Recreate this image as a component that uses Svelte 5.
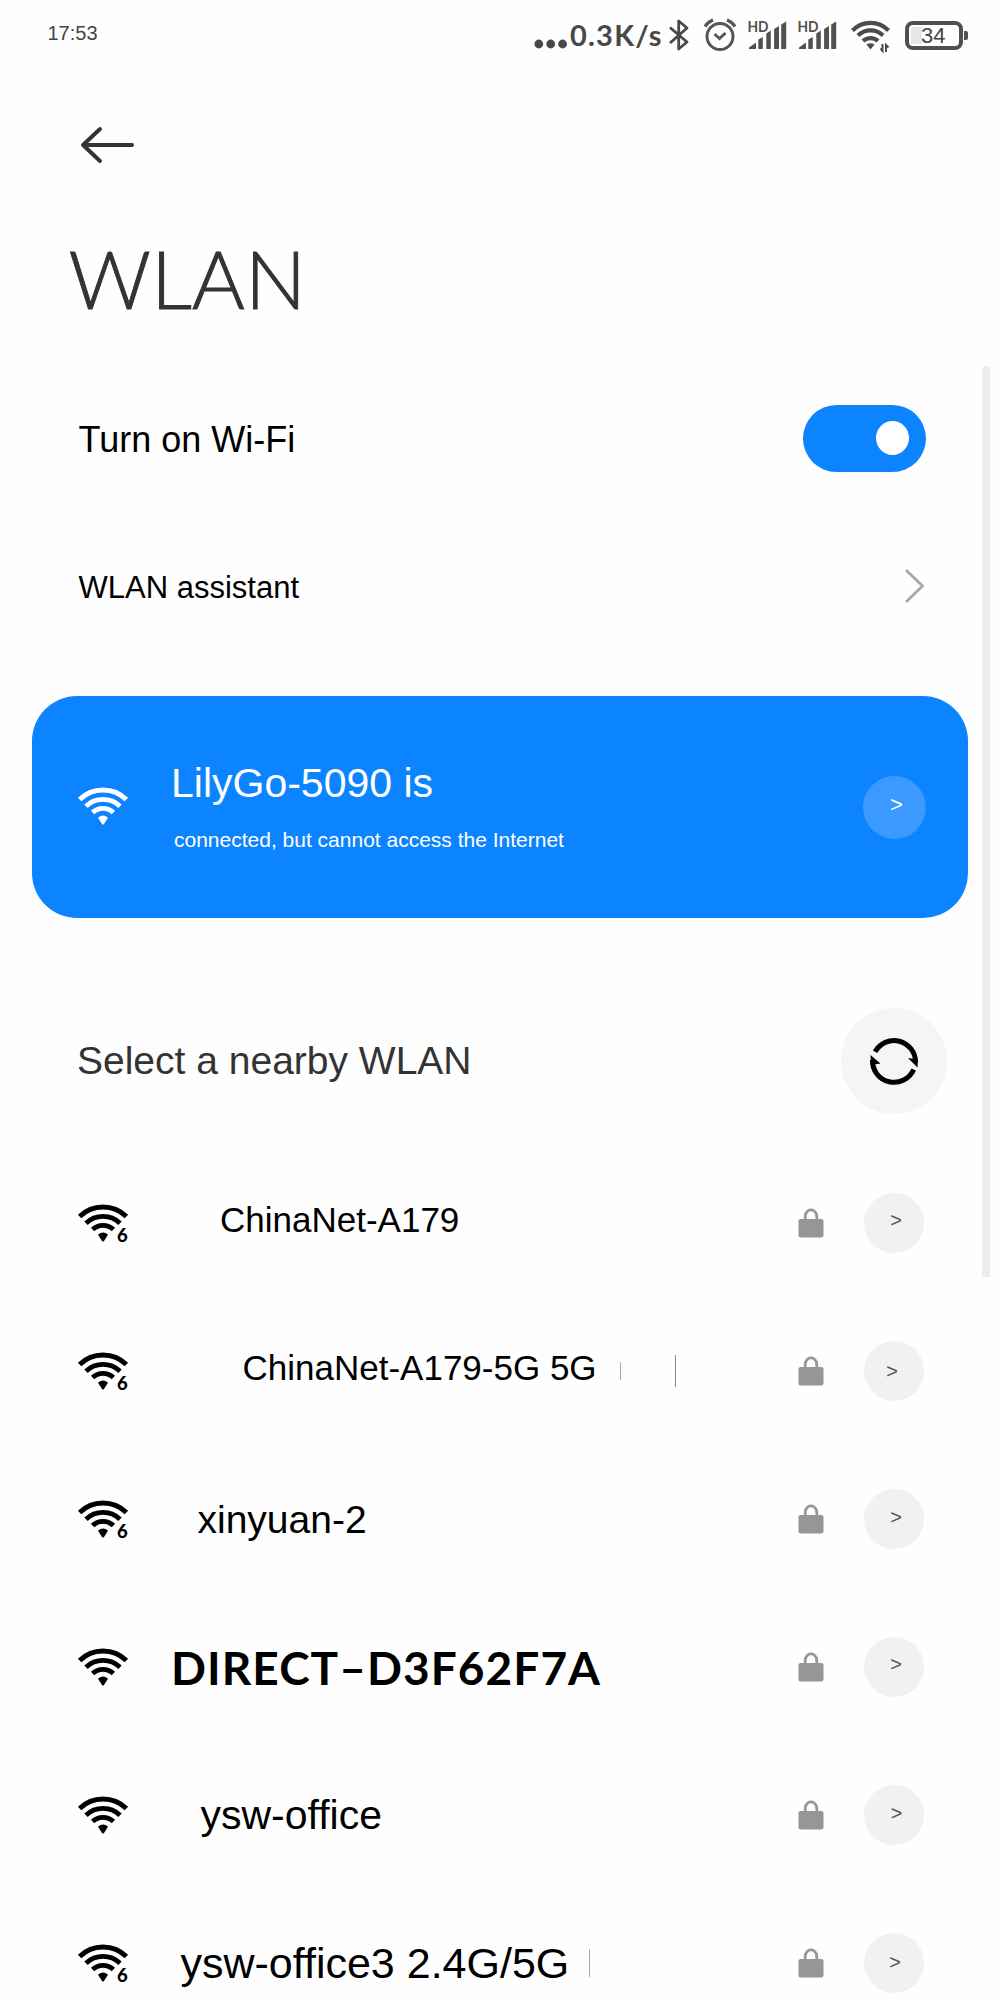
<script>
  const networks = [
    { name: 'ChinaNet-A179', six: true, size: 35, left: 220, lift: 6, dx: 2, dy: -2.5, marks: [] },
    { name: 'ChinaNet-A179-5G 5G', six: true, size: 35, left: 242.5, lift: 6, dx: -2, dy: 0.5, marks: [{ gap: 23, h: 18, c: '#aaa' }, { gap: 54, h: 32, c: '#888' }] },
    { name: 'xinyuan-2', six: true, size: 39, left: 197.5, lift: -2, dx: 2, dy: -1.5, marks: [] },
    { name: 'DIRECT–D3F62F7A', six: false, size: 46, left: 171, lift: 0, dx: 2, dy: -2.5, marks: [], bold: true },
    { name: 'ysw-office', six: false, size: 41, left: 200.5, lift: 0, dx: 2.5, dy: -1.5, marks: [] },
    { name: 'ysw-office3 2.4G/5G', six: true, size: 43, left: 180.5, lift: 0, dx: 1, dy: -0.5, marks: [{ gap: 20, h: 28, c: '#aaa' }] },
  ];
</script>

{#snippet wifi(six)}
  <svg class="wifi" viewBox="0 0 52 42" width="52" height="42">
    <g fill="none" stroke="currentColor" stroke-width="4.9">
      <path d="M1.6 13.6A33.4 33.4 0 0 1 48.4 13.6" />
      <path d="M8 20.2A24.7 24.7 0 0 1 42 20.2" />
      <path d="M14.6 26.6A14.8 14.8 0 0 1 35.4 26.6" />
    </g>
    <path d="M20 31.8Q25 27 30 31.8L26 38Q25 39 24 38Z" fill="currentColor" />
    {#if six}<text class="six" x="39" y="38.5">6</text>{/if}
  </svg>
{/snippet}

{#snippet signal()}
  <svg class="signal" viewBox="746 16 42 36" width="42" height="36">
    <text class="hd" x="747.5" y="31" textLength="21" lengthAdjust="spacingAndGlyphs">HD</text>
    <path d="M749 48V46.5L756 41.5V48ZM758.3 48V38.5L762.8 36V48ZM766.3 48V32.5L770.8 29.5V48ZM774.1 48V28L779 25V48ZM781.2 48V23.5L786.2 20.5V48Z" fill="#505050" />
  </svg>
{/snippet}

<div class="screen">
  <header class="status">
    <span class="time">17:53</span>
    <svg class="dots" viewBox="534 38 34 12" width="34" height="12">
      <circle cx="538.8" cy="44" r="4.4" /><circle cx="550.7" cy="44" r="4.4" /><circle cx="562.6" cy="44" r="4.4" />
    </svg>
    <span class="speed">0.3K/s</span>
    <svg class="bt" viewBox="668 17 22 36" width="22" height="36">
      <path d="M670 27.5L687 42L678.7 49V21L687 28L670 43" fill="none" stroke="#484848" stroke-width="2.8" stroke-linejoin="round" />
    </svg>
    <svg class="alarm" viewBox="703 17 34 36" width="34" height="36">
      <g fill="none" stroke="#555" stroke-width="3">
        <circle cx="720" cy="36.5" r="13" />
        <path d="M705 26.5Q708 22 713 20M727 20Q732 22 735 26.5" stroke-width="3.2" />
        <path d="M714.5 34L719.5 38.5L725.5 33" stroke-width="2.8" />
      </g>
    </svg>
    {@render signal()}
    {@render signal()}
    <svg class="swifi" viewBox="850 17 40 36" width="40" height="36">
      <g fill="none" stroke="#4b4b4b" stroke-width="4.2">
        <path d="M852.5 30.5A25 25 0 0 1 888.5 30.5" />
        <path d="M858 35.5A18 18 0 0 1 883 35.5" />
        <path d="M863 41A11 11 0 0 1 878 41" />
      </g>
      <path d="M866.5 44.5Q870.5 42 874.5 44.5L870.5 49.5Z" fill="#4b4b4b" />
      <path d="M882.5 44V51L880.5 48.5M886 52V45L888.5 47.5" fill="none" stroke="#4b4b4b" stroke-width="2" />
    </svg>
    <div class="battery">
      <span class="cell"><span class="level"></span><span class="pct">34</span></span>
      <span class="nub"></span>
    </div>
  </header>

  <nav class="back">
    <svg viewBox="80 125 56 40" width="56" height="40">
      <path d="M100 129L83 145L100 161M84 145H132" fill="none" stroke="#333" stroke-width="4" stroke-linecap="round" stroke-linejoin="round" />
    </svg>
  </nav>

  <h1>WLAN</h1>

  <section class="row wifi-row">
    <span class="label">Turn on Wi-Fi</span>
    <span class="toggle"><span class="knob"></span></span>
  </section>

  <section class="row assistant">
    <span class="label">WLAN assistant</span>
    <svg viewBox="904 568 22 36" width="22" height="36">
      <path d="M906 570L922.5 586L906 602" fill="none" stroke="#a8a8a8" stroke-width="2.8" />
    </svg>
  </section>

  <section class="card">
    {@render wifi(false)}
    <div class="info">
      <div class="ssid">LilyGo-5090 is</div>
      <div class="note">connected, but cannot access the Internet</div>
    </div>
    <span class="badge"><span>&gt;</span></span>
  </section>

  <section class="nearby">
    <h2>Select a nearby WLAN</h2>
    <span class="refresh">
      <svg viewBox="867.5 1034 54 54" width="54" height="54">
        <g fill="none" stroke="#000" stroke-width="5">
          <path d="M875.6 1051.8A21.5 21.5 0 0 1 916 1062" />
          <path d="M914.2 1069.4A21.5 21.5 0 0 1 873 1060" />
        </g>
        <path d="M908.5 1058L918.5 1059.5L918 1067.5ZM871 1055L881 1063.5L871.5 1065Z" />
      </svg>
    </span>
  </section>

  <ul class="list">
    {#each networks as n}
      <li style="--size:{n.size}px;--left:{n.left - 130}px;--lift:{Math.max(n.lift, 0)}px;--drop:{Math.max(-n.lift, 0)}px;--dx:{n.dx * 2}px;--dy:{n.dy * -2}px">
        {@render wifi(n.six)}
        <span class="name" class:bold={n.bold}>{n.name}</span>
        {#each n.marks as m}
          <i class="mark" style="margin-left:{m.gap}px;height:{m.h}px;background:{m.c}"></i>
        {/each}
        <svg class="lock" viewBox="0 0 26 30" width="26" height="30">
          <path d="M7.2 13V8.5A5.8 6.6 0 0 1 18.8 8.5V13" fill="none" stroke="#969696" stroke-width="2.8" />
          <rect x="0.5" y="11" width="25" height="18.5" rx="2" fill="#969696" />
        </svg>
        <span class="go"><span>&gt;</span></span>
      </li>
    {/each}
  </ul>

  <div class="scrollbar"></div>
</div>

<style>
  :global(body) { background: #fefefe; }
  * { box-sizing: border-box; }
  .screen {
    position: relative;
    width: 1000px;
    height: 2000px;
    overflow: hidden;
    background: #fefefe;
    color: #000;
    font-family: "Liberation Sans", Arial, sans-serif;
  }
  span, h1, h2, .ssid, .note { white-space: nowrap; }
  svg { flex: none; display: block; overflow: visible; }

  .status { display: flex; align-items: center; height: 70px; padding-left: 47.5px; }
  .time { width: 486.5px; font-size: 20px; line-height: 24px; color: #444; margin-top: -4px; }
  .dots { fill: #484848; margin-top: 18px; }
  .speed {
    width: 100px;
    padding-left: 2px;
    font: 700 29px/36px Lato, sans-serif;
    letter-spacing: 1.2px;
    color: #484848;
  }
  .bt { margin-right: 13px; }
  .alarm { margin-right: 9px; }
  .signal { margin-right: 8px; }
  .hd { font: 700 14.5px Lato, sans-serif; fill: #505050; }
  .swifi { margin-left: 4px; }
  .battery { display: flex; align-items: center; margin-left: 15px; }
  .cell {
    display: grid;
    grid-template-columns: 11px 1fr;
    align-items: center;
    width: 58px;
    height: 29px;
    padding: 0 2px;
    border: 4px solid #505050;
    border-radius: 8px;
    font-size: 22px;
    line-height: 21px;
    color: #444;
  }
  .level { height: 17px; background: #e6e6e6; }
  .pct { margin-left: -1px; }
  .nub { width: 4px; height: 9px; margin-left: 1px; border-radius: 0 2px 2px 0; background: #505050; }

  .back { height: 110px; padding: 55px 0 0 80px; }
  h1 {
    margin: 0;
    height: 170px;
    padding: 49px 0 0 68.5px;
    font: 300 81px/98px Lato, sans-serif;
    color: #333;
    -webkit-text-stroke: 0.9px #333;
  }
  .row { display: flex; align-items: center; justify-content: space-between; padding: 0 74.5px 0 78.5px; }
  .label { padding-top: 3px; }
  .wifi-row { height: 176px; font-size: 36px; }
  .assistant { height: 120px; font-size: 31px; }
  .toggle {
    display: flex;
    align-items: center;
    justify-content: flex-end;
    width: 123px;
    height: 67px;
    padding-right: 17px;
    border-radius: 34px;
    background: #0d84ff;
  }
  .knob { width: 33px; height: 34px; border-radius: 50%; background: #fff; }

  .card {
    display: flex;
    align-items: center;
    height: 222px;
    margin: 50px 32px 0;
    padding: 0 42px 0 46px;
    border-radius: 45px;
    background: #0d84ff;
    color: #fff;
  }
  .info { flex: 1; padding: 0 0 1px 41px; }
  .ssid { font-size: 41px; line-height: 50px; }
  .note { font-size: 21px; line-height: 30px; margin: 17px 0 0 3px; }
  .badge {
    display: flex;
    align-items: center;
    justify-content: center;
    width: 63px;
    height: 63px;
    padding: 0 0 4px 4px;
    border-radius: 50%;
    background: #3b99ff;
    font-size: 22px;
  }

  .nearby { display: flex; align-items: center; justify-content: space-between; height: 231px; padding: 54px 53px 0 77px; }
  h2 { margin: 0; font-size: 39px; font-weight: 400; color: #333; }
  .refresh { display: flex; align-items: center; justify-content: center; width: 106px; height: 106px; border-radius: 50%; background: #f5f5f5; }

  .list { margin: 0; padding: 0; list-style: none; }
  li { display: flex; align-items: center; height: 148px; padding: 0 76px 0 78px; }
  li .wifi { margin-top: 2px; }
  .name { margin-left: var(--left); padding-top: var(--drop); padding-bottom: var(--lift); font-size: var(--size); }
  .bold { font-family: Lato, sans-serif; font-weight: 700; letter-spacing: 1.05px; }
  .mark { width: 1px; }
  .lock { margin: 0 40px 0 auto; }
  .six { font: 900 18.5px Lato, sans-serif; fill: currentColor; }
  .go { display: flex; align-items: center; justify-content: center; width: 60px; height: 60px; border-radius: 50%; background: #f1f1f1; color: #555; font-size: 20px; }
  .go span { margin-left: var(--dx); margin-bottom: var(--dy); }

  .scrollbar { position: absolute; left: 982px; top: 366px; width: 8px; height: 911px; border-radius: 4px 4px 0 0; background: #ededed; }
</style>
